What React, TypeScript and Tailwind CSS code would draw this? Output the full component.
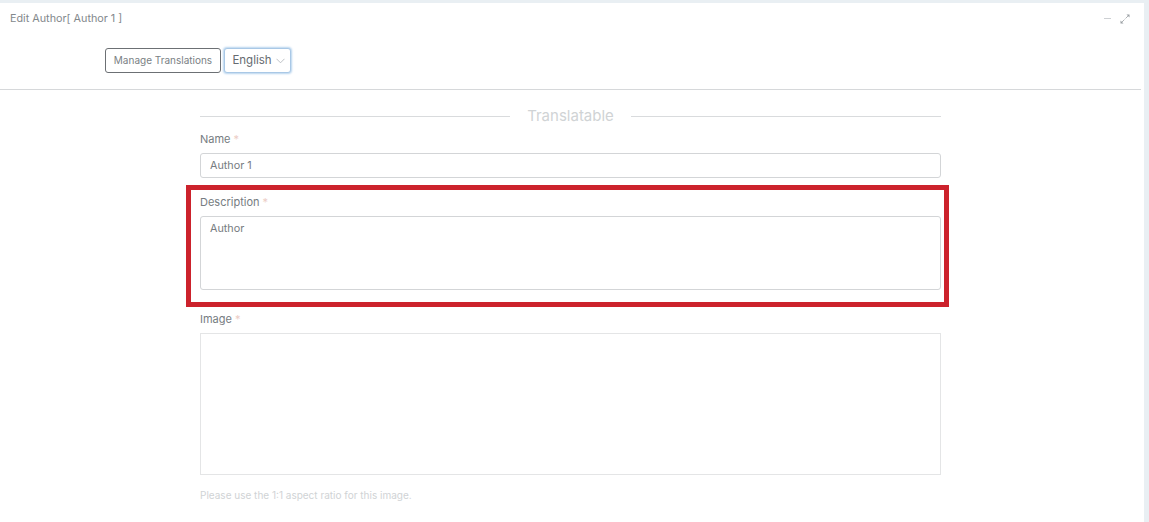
import React from "react";

const font = { fontFamily: '"Inter", "Noto Sans", sans-serif' };

function Label({ text }: { text: string }) {
  return (
    <div className="h-[14px] flex items-center text-[11px] leading-[14px] text-[#767c81]">
      {text}
      <span className="ml-[3px] text-[#eccdc5]">*</span>
    </div>
  );
}

export default function App() {
  return (
    <div className="h-[522px] w-[1149px] overflow-hidden bg-[#e9eff3] pt-[3px]" style={font}>
      <div className="relative h-[519px] w-[1144px] bg-white">
        <div className="flex h-[31px] items-center justify-between pl-[10px] pr-[14px]">
          <span className="pt-[2px] text-[10.800px] text-[#83888c]">Edit Author[ Author 1 ]</span>
          <div className="flex items-center gap-[9px]">
            <span className="h-px w-[7px] bg-[#cdd0d3]" />
            <svg width="10" height="10" viewBox="0 0 10 10" fill="none" stroke="#9a9fa3" strokeWidth="0.800">
              <path d="M5.500 4.500 8 2" />
              <path d="M4.500 5.500 2 8" />
              <path d="M6.500 0.500H9.500V3.500Z" fill="#9a9fa3" stroke="none" />
              <path d="M0.500 6.500V9.500H3.500Z" fill="#9a9fa3" stroke="none" />
            </svg>
          </div>
        </div>

        <div className="mt-[14px] flex items-center gap-[3px] pl-[105px]">
          <button className="h-[25px] w-[116px] rounded-[3px] border border-[#6c7074] bg-white text-[10px] text-[#7a7f84]">
            Manage Translations
          </button>
          <button className="flex h-[25px] w-[67px] items-center justify-center gap-[4px] rounded-[3px] border border-[#a9c8e6] bg-white pl-[2px] text-[11.500px] text-[#666b70] shadow-[0_0_2px_1px_#b8d4ee]">
            English
            <svg width="9" height="6" viewBox="0 0 9 6" fill="none" stroke="#b5babf" strokeWidth="0.900">
              <path d="M0.500 0.800 4.500 4.800 8.500 0.800" />
            </svg>
          </button>
        </div>

        <div className="mt-[16px] mr-[3px] h-px bg-[#d6d8da]" />

        <div className="ml-[200px] w-[741px]">
          <div className="mt-[17px] flex h-[18px] items-center gap-[17px]">
            <div className="h-px flex-1 bg-[#d9dbdd]" />
            <span className="text-[15px] text-[#d0d3d5]">Translatable</span>
            <div className="h-px flex-1 bg-[#d9dbdd]" />
          </div>

          <div className="mt-[7px]">
            <Label text="Name" />
          </div>
          <div className="mt-[7px] flex h-[25px] items-center rounded-[3px] border border-[#d3d5d7] pl-[9px] pt-[1px] text-[10.800px] text-[#767c81]">
            Author 1
          </div>

          <div className="mt-[17px]">
            <Label text="Description" />
          </div>
          <div className="mt-[7px] h-[74px] rounded-[3px] border border-[#d3d5d7] pl-[9px] pt-[5px] text-[10.800px] leading-[14px] text-[#767c81]">
            Author
          </div>

          <div className="mt-[22px]">
            <Label text="Image" />
          </div>
          <div className="mt-[7px] h-[142px] border border-[#e4e5e6]" />
          <div className="mt-[14px] text-[10px] leading-[12px] text-[#d0d3d5]">
            Please use the 1:1 aspect ratio for this image.
          </div>
        </div>

        <div className="absolute left-[186px] top-[182px] h-[122px] w-[763px] border-[5px] border-[#cc222c]" />
      </div>
    </div>
  );
}
